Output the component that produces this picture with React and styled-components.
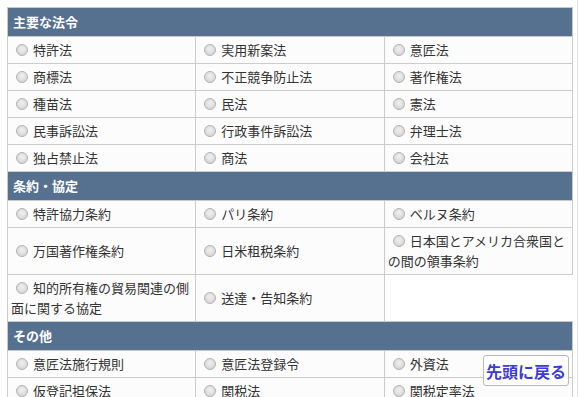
import React from 'react';
import styled, { createGlobalStyle } from 'styled-components';

const GlobalStyle = createGlobalStyle`
  html, body {
    margin: 0;
    padding: 0;
    background: #fff;
    overflow: hidden;
  }
  body {
    font-family: "Noto Sans CJK JP", "Noto Sans", sans-serif;
    color: #333;
  }
`;

const Page = styled.div`
  box-sizing: border-box;
  width: 578px;
  min-height: 397px;
  padding: 7px 4px 0 7px;
  border-right: 1px solid #e2e2e2;
`;

const LawTable = styled.table`
  width: 566px;
  table-layout: fixed;
  border-collapse: collapse;
  font-size: 13px;
`;

const HeadCell = styled.th`
  background: #56708f;
  color: #fff;
  font-weight: bold;
  text-align: left;
  padding: 4px 5px;
  height: 20px;
  line-height: 20px;
  border: 1px solid #c8c8c8;
`;

const Cell = styled.td`
  background: #fcfcfc;
  border: 1px solid #cccccc;
  padding: 3px 3px;
  line-height: 20px;
  vertical-align: middle;
`;

const EmptyCell = styled.td`
  border: none;
  background: #fff;
`;

const Radio = styled.span`
  display: inline-block;
  box-sizing: border-box;
  width: 12px;
  height: 12px;
  margin: 0 5px 0 5px;
  border-radius: 50%;
  border: 1px solid #b4b4b4;
  background: radial-gradient(circle at 50% 40%, #f0f0f0 0%, #dcdcdc 60%, #c9c9c9 100%);
  vertical-align: -1px;
`;

const BackToTop = styled.button`
  position: fixed;
  right: 15px;
  bottom: 11px;
  width: 86px;
  height: 31px;
  padding: 0;
  background: #fff;
  border: 1px solid #b9b9b9;
  border-radius: 3px;
  color: #3b3bd6;
  font-family: "Noto Sans CJK JP", sans-serif;
  font-size: 16px;
  font-weight: bold;
  cursor: pointer;
`;

const sections = [
  {
    title: '主要な法令',
    rows: [
      ['特許法', '実用新案法', '意匠法'],
      ['商標法', '不正競争防止法', '著作権法'],
      ['種苗法', '民法', '憲法'],
      ['民事訴訟法', '行政事件訴訟法', '弁理士法'],
      ['独占禁止法', '商法', '会社法'],
    ],
  },
  {
    title: '条約・協定',
    rows: [
      ['特許協力条約', 'パリ条約', 'ベルヌ条約'],
      ['万国著作権条約', '日米租税条約', '日本国とアメリカ合衆国との間の領事条約'],
      ['知的所有権の貿易関連の側面に関する協定', '送達・告知条約'],
    ],
  },
  {
    title: 'その他',
    rows: [
      ['意匠法施行規則', '意匠法登録令', '外資法'],
      ['仮登記担保法', '関税法', '関税定率法'],
    ],
  },
];

const App = () => (
  <>
    <GlobalStyle />
    <Page>
      <LawTable>
        <tbody>
          {sections.map((section) => (
            <React.Fragment key={section.title}>
              <tr>
                <HeadCell colSpan={3}>{section.title}</HeadCell>
              </tr>
              {section.rows.map((row, i) => (
                <tr key={i}>
                  {row.map((name) => (
                    <Cell key={name}>
                      <Radio />
                      {name}
                    </Cell>
                  ))}
                  {row.length < 3 && <EmptyCell />}
                </tr>
              ))}
            </React.Fragment>
          ))}
        </tbody>
      </LawTable>
    </Page>
    <BackToTop>先頭に戻る</BackToTop>
  </>
);

export default App;
